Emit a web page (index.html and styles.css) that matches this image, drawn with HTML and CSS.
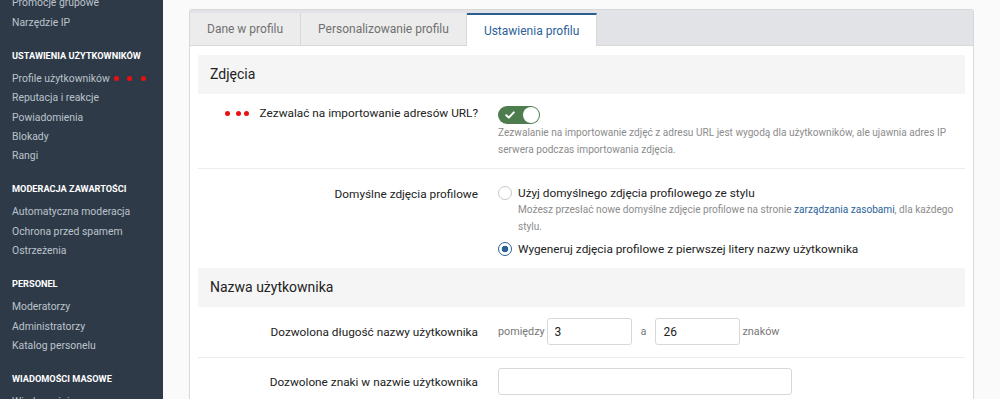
FILE: index.html
```html
<!DOCTYPE html>
<html lang="pl">
<head>
  <meta charset="UTF-8" />
  <title>Opcje: Profile użytkowników</title>
  <link rel="stylesheet" href="styles.css">
</head>
<body>

  <aside class="sidebar">
    <ul class="nav">
      <li class="nav-item">Promocje grupowe</li>
      <li class="nav-item">Narzędzie IP</li>

      <li class="nav-head">Ustawienia użytkowników</li>
      <li class="nav-item">Profile użytkowników <span class="dots dots-nav"><i></i><i></i><i></i></span></li>
      <li class="nav-item">Reputacja i reakcje</li>
      <li class="nav-item">Powiadomienia</li>
      <li class="nav-item">Blokady</li>
      <li class="nav-item">Rangi</li>

      <li class="nav-head">Moderacja zawartości</li>
      <li class="nav-item">Automatyczna moderacja</li>
      <li class="nav-item">Ochrona przed spamem</li>
      <li class="nav-item">Ostrzeżenia</li>

      <li class="nav-head">Personel</li>
      <li class="nav-item">Moderatorzy</li>
      <li class="nav-item">Administratorzy</li>
      <li class="nav-item">Katalog personelu</li>

      <li class="nav-head">Wiadomości masowe</li>
      <li class="nav-item">Wiadomości masowe</li>
    </ul>
  </aside>

  <main class="main">
    <div class="panel">
      <div class="tabs">
        <a class="tab">Dane w profilu</a>
        <a class="tab">Personalizowanie profilu</a>
        <a class="tab tab-active">Ustawienia profilu</a>
      </div>

      <div class="panel-body">
        <h3 class="section-head">Zdjęcia</h3>

        <div class="row row-toggle">
          <div class="row-label">
            <span class="dots dots-label"><i></i><i></i><i></i></span>Zezwalać na importowanie adresów URL?
          </div>
          <div class="row-value">
            <span class="toggle">
              <svg class="toggle-check" width="10" height="8" viewBox="0 0 10 8"><path d="M1.2 4.2 L3.8 6.6 L8.8 1.4" fill="none" stroke="#fff" stroke-width="2" stroke-linecap="round" stroke-linejoin="round"/></svg>
              <span class="toggle-knob"></span>
            </span>
            <p class="hint">Zezwalanie na importowanie zdjęć z adresu URL jest wygodą dla użytkowników, ale ujawnia adres IP serwera podczas importowania zdjęcia.</p>
          </div>
        </div>

        <div class="row row-choices">
          <div class="row-label">Domyślne zdjęcia profilowe</div>
          <div class="row-value">
            <label class="choice">
              <span class="radio"></span>
              <span>
                <span class="choice-title">Użyj domyślnego zdjęcia profilowego ze stylu</span>
                <span class="hint hint-block">Możesz przesłać nowe domyślne zdjęcie profilowe na stronie <a href="#">zarządzania zasobami</a>, dla każdego stylu.</span>
              </span>
            </label>
            <label class="choice">
              <span class="radio radio-on"></span>
              <span>Wygeneruj zdjęcia profilowe z pierwszej litery nazwy użytkownika</span>
            </label>
          </div>
        </div>

        <h3 class="section-head">Nazwa użytkownika</h3>

        <div class="row row-input">
          <div class="row-label">Dozwolona długość nazwy użytkownika</div>
          <div class="row-value inline">
            <span class="unit">pomiędzy</span>
            <input class="input input-num" type="text" value="3">
            <span class="unit unit-a">a</span>
            <input class="input input-num" type="text" value="26">
            <span class="unit unit-after">znaków</span>
          </div>
        </div>

        <div class="row row-input row-last">
          <div class="row-label">Dozwolone znaki w nazwie użytkownika</div>
          <div class="row-value">
            <input class="input input-wide" type="text" value="">
          </div>
        </div>
      </div>
    </div>
  </main>

</body>
</html>
```

FILE: styles.css
```css
* {
  box-sizing: border-box;
}

body {
  margin: 0;
  display: flex;
  height: 399px;
  overflow: hidden;
  font-family: Roboto, "Segoe UI", sans-serif;
  font-size: 11.8px;
  color: #141414;
  background: #fafafa;
}

/* sidebar */

.sidebar {
  width: 163px;
  flex-shrink: 0;
  background: #2e3a48;
}

.nav {
  list-style: none;
  margin: -6.6px 0 0;
  padding: 0 0 0 12px;
}

.nav-item {
  height: 19.3px;
  line-height: 19.3px;
  font-size: 10.4px;
  color: #bcc3cb;
  white-space: nowrap;
  position: relative;
}

.nav-head {
  margin: 14px 0 4px;
  line-height: 19px;
  font-size: 9.2px;
  font-weight: 700;
  color: #fff;
  text-transform: uppercase;
}

/* red marker dots */

.dots {
  display: inline-flex;
  align-items: center;
}

.dots i {
  width: 5px;
  height: 5px;
  border-radius: 50%;
  background: #ea1010;
}

.dots-nav {
  position: absolute;
  left: 102px;
  top: 7px;
  gap: 8px;
}

.dots-nav i:last-child {
  margin-left: 1px;
}

.dots-label {
  margin-right: 11px;
  gap: 6px;
  vertical-align: 1px;
}

.dots-label i:last-child {
  margin-left: -3px;
}

/* panel */

.main {
  flex: 1;
  padding: 9px 26px 0;
}

.panel {
  background: #fff;
  border: 1px solid #d8d8d8;
  border-bottom: none;
  border-radius: 3px 3px 0 0;
}

.tabs {
  display: flex;
  height: 36px;
  padding-top: 3px;
  background: #e2e3e7;
  border-bottom: 1px solid #d8d8d8;
  font-size: 12px;
}

.tab {
  display: flex;
  align-items: center;
  padding: 0 17px;
  background: #ececec;
  border-right: 1px solid #d8d8d8;
  color: #707070;
}

.tab-active {
  background: #fff;
  color: #2b6299;
  border-top: 2px solid #2b5d8e;
  margin-bottom: -1px;
}

.panel-body {
  padding: 9px 8px 0;
}

.section-head {
  margin: 0;
  height: 39px;
  line-height: 39px;
  padding: 0 12px;
  background: #f5f5f5;
  font-size: 14px;
  font-weight: 400;
  color: #222;
}

/* form rows */

.row {
  display: flex;
  padding: 10px 0;
  border-bottom: 1px solid #ececec;
  line-height: 18px;
}

.row-label {
  width: 290px;
  flex-shrink: 0;
  padding-right: 10px;
  text-align: right;
  color: #222;
}

.row-value {
  flex: 1;
  padding-left: 10px;
  padding-right: 4px;
}

.row-choices {
  padding: 16px 0 10px;
  border-bottom: none;
}

.row-input {
  padding: 11px 0 12px;
}

.row-input .row-label {
  padding-top: 5px;
}

.row-last {
  padding-top: 10px;
  border-bottom: none;
}

.hint {
  margin: 0;
  font-size: 10.1px;
  line-height: 17px;
  color: #8c8c8c;
}

.hint-block {
  display: block;
}

.hint a {
  color: #2b6299;
  text-decoration: none;
}

/* toggle */

.toggle {
  display: flex;
  align-items: center;
  position: relative;
  width: 42px;
  height: 18px;
  margin-top: 2px;
  border-radius: 9px;
  background: #4d7c4f;
}

.toggle-check {
  margin-left: 7px;
}

.toggle-knob {
  position: absolute;
  right: 1px;
  top: 1px;
  width: 16px;
  height: 16px;
  border-radius: 50%;
  background: #fff;
}

/* radios */

.choice {
  display: flex;
  gap: 6px;
  color: #222;
}

.choice-title {
  display: block;
  line-height: 16px;
}

.choice + .choice {
  margin-top: 5px;
}

.radio {
  flex-shrink: 0;
  width: 14px;
  height: 14px;
  margin-top: 1px;
  border: 1px solid #c8c8c8;
  border-radius: 50%;
  background: #fff;
}

.choice + .choice .radio {
  margin-top: 2px;
}

.radio-on {
  border-color: #2b6299;
  background: radial-gradient(circle, #2b6299 3px, #fff 3.6px);
}

/* inputs */

.inline {
  display: flex;
  align-items: center;
}

.unit {
  font-size: 10.8px;
  color: #777;
}

.unit-a {
  margin: 0 7px 0 9px;
}

.unit-after {
  margin-left: 2px;
}

.input {
  height: 27px;
  padding: 0 7px;
  border: 1px solid #d8d8d8;
  border-radius: 3px;
  font-family: Roboto, "Segoe UI", sans-serif;
  font-size: 12px;
  color: #222;
  background: #fff;
}

.input-num {
  width: 85px;
  margin-left: 2px;
}

.input-wide {
  width: 294px;
}
```
